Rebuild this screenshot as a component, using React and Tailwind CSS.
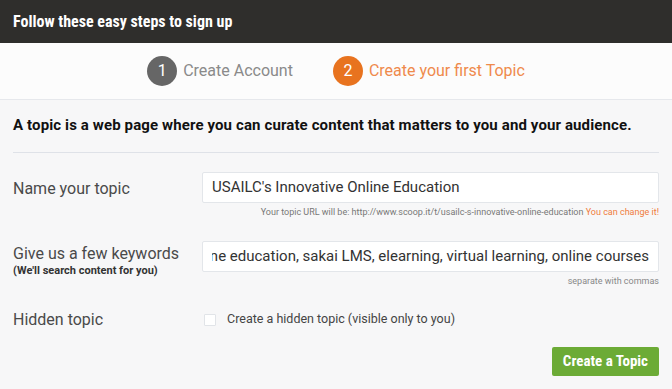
import React from 'react';

const condensed = { fontFamily: '"Roboto Condensed", "Liberation Sans Narrow", "Arial Narrow", Roboto, sans-serif' };

const Step = ({ num, label, active }) => (
    <div className="flex items-center gap-[6px]">
        <div className={`w-[30px] h-[30px] rounded-full flex items-center justify-center text-[16px] text-white ${active ? 'bg-[#e8731f]' : 'bg-[#666666]'}`}>
            {num}
        </div>
        <span className={`text-[16px] ${active ? 'text-[#ef8a4c]' : 'text-[#8a8a8a]'}`}>{label}</span>
    </div>
);

export default function App() {
    return (
        <div className="w-[672px] h-[389px] bg-[#f7f7f8] font-['Roboto',sans-serif] overflow-hidden">
            <div className="h-[43px] bg-[#2f2e2c] flex items-center px-[13px]">
                <h1 className="text-white text-[16px] font-bold" style={condensed}>Follow these easy steps to sign up</h1>
            </div>

            <div className="h-[57px] bg-[#fcfcfc] border-b border-[#e6e8ec] flex items-center justify-center gap-[40px]">
                <Step num="1" label="Create Account" />
                <Step num="2" label="Create your first Topic" active />
            </div>

            <div className="px-[13px]">
                <p className="pt-[14px] pb-[15px] text-[15px] tracking-[0.12px] font-bold text-[#111] border-b border-[#dfe2e8]">
                    A topic is a web page where you can curate content that matters to you and your audience.
                </p>

                <div className="mt-[19px] flex items-start">
                    <label className="w-[189px] pt-[5px] text-[16px] text-[#4a4a4a]">Name your topic</label>
                    <div className="flex-1">
                        <div className="h-[31px] bg-white border border-[#e3e6ea] rounded-[2px] flex items-center px-[9px] text-[15px] text-[#333]">
                            USAILC's Innovative Online Education
                        </div>
                        <div className="mt-[3px] text-right text-[9px] leading-[13px] text-[#777]">
                            Your topic URL will be: http://www.scoop.it/t/usailc-s-innovative-online-education{' '}
                            <span className="text-[#f07c3c]">You can change it!</span>
                        </div>
                    </div>
                </div>

                <div className="mt-[22px] flex items-start">
                    <div className="w-[189px]">
                        <div className="text-[16px] text-[#4a4a4a] leading-[19px] pt-[3px]">Give us a few keywords</div>
                        <div className="mt-[1px] text-[11px] font-bold text-[#333] leading-[13px]">(We'll search content for you)</div>
                    </div>
                    <div className="flex-1 min-w-0">
                        <div className="h-[31px] bg-white border border-[#e3e6ea] rounded-[2px] flex items-center px-[9px]">
                            <div className="flex-1 min-w-0 flex justify-end overflow-hidden whitespace-nowrap text-[15px] text-[#333]">
                                USAILC, online education, sakai LMS, elearning, virtual learning, online courses
                            </div>
                        </div>
                        <div className="mt-[3px] text-right text-[9px] leading-[13px] text-[#888]">separate with commas</div>
                    </div>
                </div>

                <div className="mt-[20px] flex items-center">
                    <label className="w-[189px] text-[16px] text-[#4a4a4a]">Hidden topic</label>
                    <div className="flex items-center gap-[11px] pl-[2px]">
                        <span className="w-[12px] h-[12px] bg-white border border-[#e1e4e8] rounded-[1px]" />
                        <span className="text-[12.5px] text-[#444]">Create a hidden topic (visible only to you)</span>
                    </div>
                </div>

                <div className="mt-[15px] flex justify-end">
                    <button className="h-[29px] px-[11px] bg-[#6cab36] rounded-[2px] text-white text-[15px] font-bold" style={condensed}>
                        Create a Topic
                    </button>
                </div>
            </div>
        </div>
    );
}
